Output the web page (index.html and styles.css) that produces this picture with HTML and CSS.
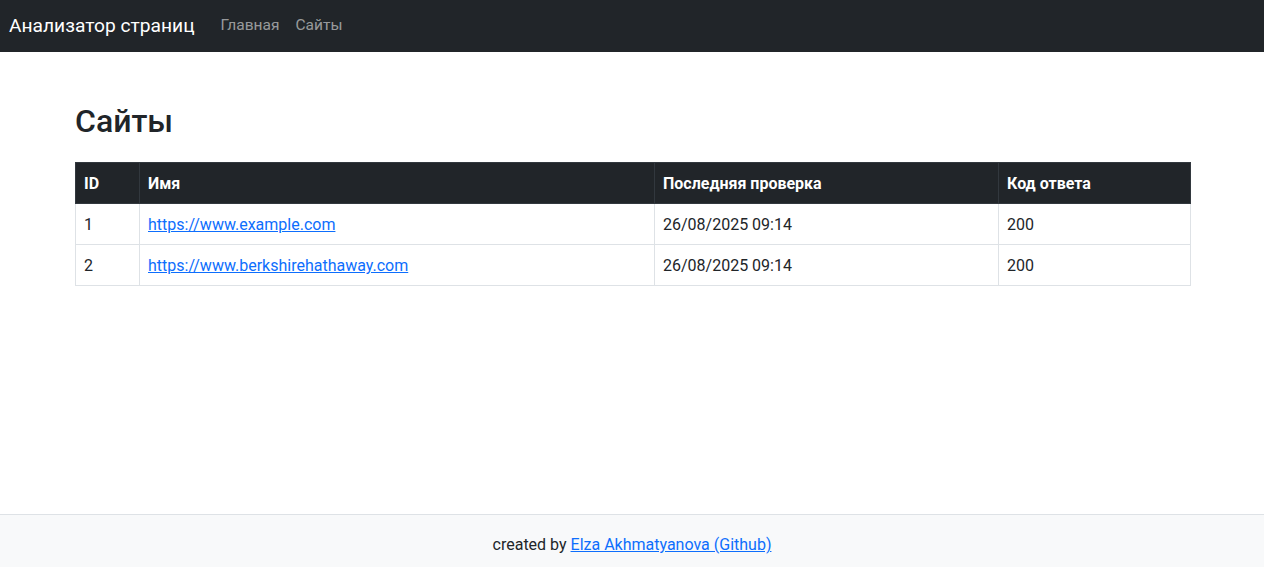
FILE: index.html
```html
<!DOCTYPE html>
<html lang="ru">
<head>
<meta charset="utf-8">
<title>Анализатор страниц</title>
<link rel="stylesheet" href="styles.css">
</head>
<body>
<div class="page">
  <nav class="navbar">
    <a class="brand" href="#">Анализатор страниц</a>
    <ul class="nav">
      <li><a class="nav-link" href="#">Главная</a></li>
      <li><a class="nav-link" href="#">Сайты</a></li>
    </ul>
  </nav>
  <main class="main">
    <h1 class="title">Сайты</h1>
    <table class="table">
      <thead>
        <tr>
          <th class="c-id">ID</th>
          <th class="c-name">Имя</th>
          <th class="c-date">Последняя проверка</th>
          <th class="c-code">Код ответа</th>
        </tr>
      </thead>
      <tbody>
        <tr>
          <td>1</td>
          <td><a href="#">https://www.example.com</a></td>
          <td>26/08/2025 09:14</td>
          <td>200</td>
        </tr>
        <tr>
          <td>2</td>
          <td><a href="#">https://www.berkshirehathaway.com</a></td>
          <td>26/08/2025 09:14</td>
          <td>200</td>
        </tr>
      </tbody>
    </table>
  </main>
  <footer class="footer">
    created by <a href="#">Elza Akhmatyanova (Github)</a>
  </footer>
</div>
</body>
</html>
```

FILE: styles.css
```css
* { box-sizing: border-box; }
html, body { margin: 0; padding: 0; }
body {
  font-family: Roboto, "Noto Sans", "Liberation Sans", sans-serif;
  font-size: 16px;
  line-height: 1.5;
  color: #212529;
  background: #fff;
}
a { color: #0d6efd; }
.page {
  min-height: 100vh;
  display: flex;
  flex-direction: column;
}
.navbar {
  height: 52px;
  background: #212529;
  display: flex;
  align-items: center;
  padding: 0 9px;
}
.brand {
  color: #fff;
  font-size: 19.2px;
  text-decoration: none;
  margin-right: 18px;
  line-height: 30px;
}
.nav {
  list-style: none;
  margin: 0;
  padding: 0;
  display: flex;
}
.nav-link {
  display: block;
  padding: 8px;
  color: rgba(255, 255, 255, 0.55);
  text-decoration: none;
  font-size: 15.5px;
}
.main {
  width: 1116px;
  margin: 50px 0 0 calc(50% - 557px);
  flex: 1;
}
.title {
  font-size: 32px;
  font-weight: 500;
  line-height: 1.2;
  margin: 0 0 22px;
}
.table {
  width: 100%;
  border-collapse: collapse;
}
.table th, .table td {
  padding: 9px 8px 7px;
  text-align: left;
  border: 1px solid #dee2e6;
  vertical-align: top;
}
.table thead th {
  background: #212529;
  color: #fff;
  font-weight: 700;
  border-color: #32383e;
}
.c-id { width: 64px; }
.c-name { width: 515px; }
.c-date { width: 344px; }
.footer {
  border-top: 1px solid #dee2e6;
  background: #f8f9fa;
  text-align: center;
  padding: 18px 0 10px;
  line-height: 24px;
}
```
